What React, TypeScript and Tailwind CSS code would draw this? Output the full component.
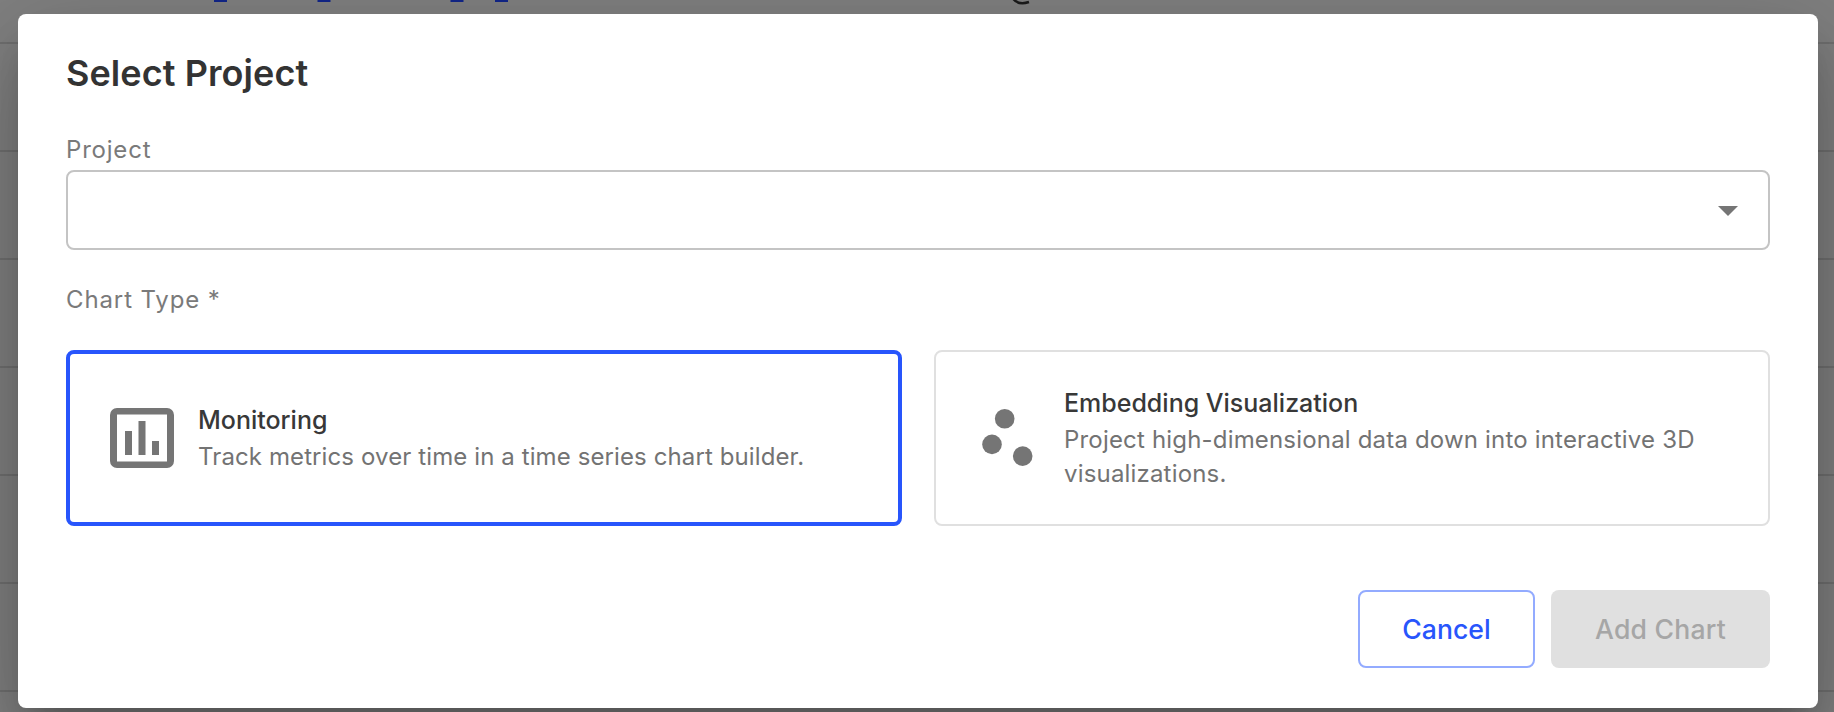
import React from "react";

const rows = [0, 1, 2, 3, 4, 5];

function Backdrop() {
  return (
    <div className="absolute inset-0 flex flex-col bg-[#808080]">
      <div className="h-11 shrink-0 border-b-2 border-[#707070]" />
      {rows.map((r) => (
        <div key={r} className="h-[108px] shrink-0 border-b-2 border-[#707070]" />
      ))}
      <svg className="absolute left-0 top-0" width="1834" height="8" viewBox="0 0 1834 8">
        <g fill="#12268a">
          <rect x="214" y="0" width="13" height="2" />
          <rect x="317.500" y="0" width="13" height="2" />
          <rect x="450.500" y="0" width="13" height="2" />
          <rect x="495" y="0" width="13" height="2" />
        </g>
        <path d="M1013 -1.500 Q1018 5.500 1029 2" fill="none" stroke="#1c1c1c" strokeWidth="2.500" />
      </svg>
    </div>
  );
}

function MonitoringIcon() {
  return (
    <svg width="64" height="60" viewBox="0 0 64 60" className="shrink-0" fill="#757575">
      <path
        fillRule="evenodd"
        d="M7 0H57A7 7 0 0 1 64 7V53A7 7 0 0 1 57 60H7A7 7 0 0 1 0 53V7A7 7 0 0 1 7 0ZM7 6.500V53.500H57V6.500Z"
      />
      <rect x="15" y="23" width="7" height="24" />
      <rect x="28.500" y="13" width="7" height="34" />
      <rect x="42" y="33" width="7" height="14" />
    </svg>
  );
}

function ScatterIcon() {
  return (
    <svg width="51" height="57" viewBox="0 0 51 57" className="mb-[2px] shrink-0" fill="#757575">
      <circle cx="22.700" cy="9.800" r="9.800" />
      <circle cx="10" cy="35.400" r="9.800" />
      <circle cx="40.700" cy="47.100" r="9.800" />
    </svg>
  );
}

export default function App() {
  return (
    <div className="relative h-[712px] w-full overflow-hidden px-[18px] pt-[14px] font-['Inter',sans-serif]">
      <Backdrop />
      <div
        role="dialog"
        className="relative flex h-[694px] w-[1800px] flex-col rounded-lg bg-white px-12 shadow-[0_22px_30px_-14px_rgba(0,0,0,0.2),0_48px_76px_6px_rgba(0,0,0,0.14),0_18px_92px_16px_rgba(0,0,0,0.12)]"
      >
        <h2 className="mt-[35px] h-12 text-[36px] leading-[48px] font-semibold tracking-[0.08px] text-[#333]">
          Select Project
        </h2>
        <label className="mt-[37px] h-8 text-[24px] leading-8 tracking-[0.8px] text-[#7a7a7a]">Project</label>
        <div className="mt-[4px] flex h-20 items-center justify-end rounded-lg border-2 border-[#c4c4c4] pr-[30px]">
          <svg width="20" height="10" viewBox="0 0 20 10" className="mt-[2px]">
            <path d="M0 0H20L10 10Z" fill="#757575" />
          </svg>
        </div>
        <div className="mt-[34px] h-8 text-[24px] leading-8 tracking-[0.88px] text-[#7a7a7a]">Chart Type *</div>
        <div className="mt-[34px] grid h-44 grid-cols-2 gap-8">
          <button className="flex items-center rounded-lg border-4 border-[#2855fc] pl-10 text-left">
            <MonitoringIcon />
            <span className="ml-6 flex flex-col">
              <span className="mb-[2px] text-[25px] leading-[34px] font-medium text-[#383838]">Monitoring</span>
              <span className="mt-px text-[24px] leading-[34px] tracking-[0.107px] text-[#737373]">
                Track metrics over time in a time series chart builder.
              </span>
            </span>
          </button>
          <button className="flex items-center rounded-lg border-2 border-[#e0e0e0] pl-[46px] text-left">
            <ScatterIcon />
            <span className="ml-[31px] flex flex-col">
              <span className="mb-[2px] text-[25px] leading-[34px] font-medium text-[#383838]">
                Embedding Visualization
              </span>
              <span className="mt-px text-[24px] leading-[34px] tracking-[0.18px] text-[#737373]">
                Project high-dimensional data down into interactive 3D<br />visualizations.
              </span>
            </span>
          </button>
        </div>
        <div className="mt-16 flex h-[78px] justify-end gap-4">
          <button className="w-[177px] rounded-lg border-2 border-[#93abff] pt-[2px] text-[26.6px] font-medium tracking-[0.05px] text-[#2855fc]">
            Cancel
          </button>
          <button className="w-[219px] rounded-lg bg-[#e0e0e0] pt-[2px] text-[26.6px] font-medium tracking-[0.2px] text-[#a6a6a6]">
            Add Chart
          </button>
        </div>
      </div>
    </div>
  );
}
